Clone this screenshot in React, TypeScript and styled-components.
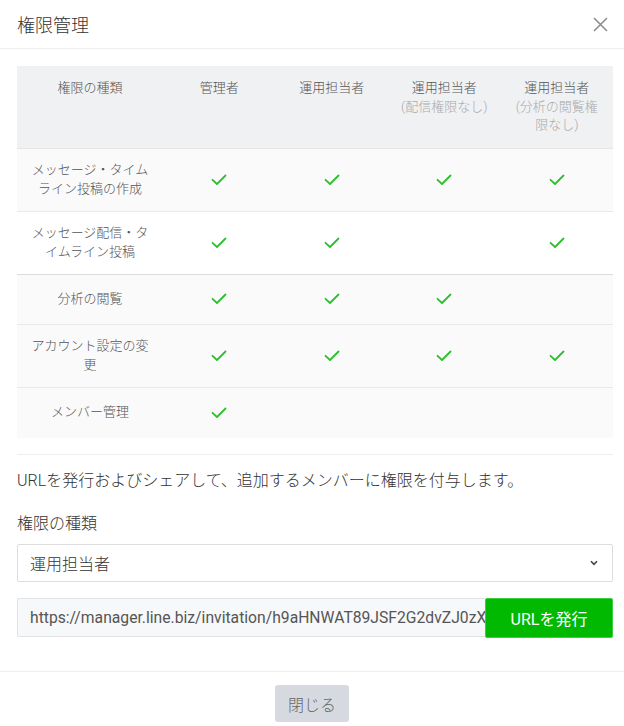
import React from "react";
import styled, { createGlobalStyle } from "styled-components";

const GlobalStyle = createGlobalStyle`
  html, body {
    margin: 0;
    padding: 0;
    background: #ffffff;
  }
  body {
    font-family: Roboto, "Noto Sans CJK JP", sans-serif;
    color: #333333;
  }
  * {
    box-sizing: border-box;
  }
`;

const Modal = styled.div`
  width: 624px;
  height: 726px;
  background: #ffffff;
  display: flex;
  flex-direction: column;
`;

const Header = styled.div`
  height: 49px;
  padding: 0 14px 0 17px;
  border-bottom: 1px solid #eeeeee;
  display: flex;
  align-items: center;
  justify-content: space-between;
`;

const Title = styled.h1`
  margin: 0;
  font-size: 18px;
  font-weight: 300;
  color: #333333;
`;

const CloseIcon = styled.button`
  width: 20px;
  height: 20px;
  padding: 0;
  border: none;
  background: none;
  display: flex;
  align-items: center;
  justify-content: center;
  cursor: pointer;
`;

const Body = styled.div`
  padding: 17px 11px 0 17px;
  flex: 1;
`;

const Table = styled.div`
  display: grid;
  grid-template-columns: 146px repeat(4, 1fr);
  font-size: 13px;
  font-weight: 300;
  line-height: 18.5px;
  color: #555555;
`;

const HeadCell = styled.div`
  background: #f0f1f3;
  padding: 13px 10px;
  text-align: center;
  border-bottom: 1px solid #e6e6e6;
`;

const Sub = styled.span`
  display: block;
  color: #aaaaaa;
`;

const Cell = styled.div<{ $white?: boolean; $strong?: boolean; $last?: boolean }>`
  background: ${(p) => (p.$white ? "#ffffff" : "#fafafa")};
  border-bottom: ${(p) =>
    p.$last ? "none" : p.$strong ? "1px solid #dcdcdc" : "1px solid #e9e9e9"};
  min-height: 50px;
  padding: 12.5px 14px;
  display: flex;
  align-items: center;
  justify-content: center;
  text-align: center;
`;

const Divider = styled.div`
  height: 1px;
  background: #eeeeee;
  margin-top: 16px;
`;

const Desc = styled.p`
  margin: 15px 0 0;
  font-size: 16px;
  font-weight: 300;
  line-height: 22px;
  color: #333333;
`;

const Label = styled.div`
  margin-top: 21px;
  font-size: 16px;
  font-weight: 300;
  line-height: 22px;
  color: #333333;
`;

const Select = styled.div`
  margin-top: 9px;
  height: 38px;
  border: 1px solid #dddddd;
  border-radius: 2px;
  padding: 0 14px 0 12px;
  display: flex;
  align-items: center;
  justify-content: space-between;
  font-size: 16px;
  font-weight: 300;
  color: #333333;
`;

const UrlRow = styled.div`
  margin-top: 16px;
  display: flex;
  height: 40px;
`;

const UrlInput = styled.div`
  flex: 1;
  min-width: 0;
  height: 39px;
  border: 1px solid #e3e3e3;
  border-right: none;
  background: #f7f8f9;
  border-radius: 2px 0 0 2px;
  padding: 0 12px;
  display: flex;
  align-items: center;
  overflow: hidden;
  white-space: nowrap;
  font-size: 15.7px;
  color: #555555;
`;

const IssueButton = styled.button`
  width: 128px;
  height: 40px;
  border: 1px solid #3ccf3c;
  background: #00b900;
  color: #ffffff;
  font-family: inherit;
  font-size: 16px;
  border-radius: 2px;
  cursor: pointer;
`;

const Footer = styled.div`
  height: 55px;
  border-top: 1px solid #eeeeee;
  display: flex;
  justify-content: center;
  padding-top: 13px;
`;

const CloseButton = styled.button`
  width: 74px;
  height: 37px;
  border: none;
  border-radius: 3px;
  background: #d6dae0;
  color: #666666;
  font-family: inherit;
  font-size: 16px;
  font-weight: 300;
  cursor: pointer;
`;

const Check = () => (
  <svg width="16" height="12" viewBox="0 0 16 12">
    <path
      d="M1.5 5.8 L6 10 L14.5 1.5"
      fill="none"
      stroke="#2dbf2d"
      strokeWidth="1.8"
      strokeLinecap="round"
      strokeLinejoin="round"
    />
  </svg>
);

type Row = { name: string; checks: boolean[]; white?: boolean; strong?: boolean };

const rows: Row[] = [
  { name: "メッセージ・タイムライン投稿の作成", checks: [true, true, true, true] },
  { name: "メッセージ配信・タイムライン投稿", checks: [true, true, false, true], white: true, strong: true },
  { name: "分析の閲覧", checks: [true, true, true, false] },
  { name: "アカウント設定の変更", checks: [true, true, true, true] },
  { name: "メンバー管理", checks: [true, false, false, false] },
];

export default function App() {
  return (
    <>
      <GlobalStyle />
      <Modal>
        <Header>
          <Title>権限管理</Title>
          <CloseIcon aria-label="close">
            <svg width="15" height="15" viewBox="0 0 15 15">
              <path d="M1 1 L14 14 M14 1 L1 14" stroke="#8a8a8a" strokeWidth="1.5" />
            </svg>
          </CloseIcon>
        </Header>
        <Body>
          <Table>
            <HeadCell>権限の種類</HeadCell>
            <HeadCell>管理者</HeadCell>
            <HeadCell>運用担当者</HeadCell>
            <HeadCell>
              運用担当者
              <Sub>(配信権限なし)</Sub>
            </HeadCell>
            <HeadCell>
              運用担当者
              <Sub>(分析の閲覧権限なし)</Sub>
            </HeadCell>
            {rows.map((r, i) => (
              <React.Fragment key={r.name}>
                <Cell $white={r.white} $strong={r.strong} $last={i === rows.length - 1}>
                  {r.name}
                </Cell>
                {r.checks.map((c, j) => (
                  <Cell
                    key={j}
                    $white={r.white}
                    $strong={r.strong}
                    $last={i === rows.length - 1}
                  >
                    {c ? <Check /> : null}
                  </Cell>
                ))}
              </React.Fragment>
            ))}
          </Table>
          <Divider />
          <Desc>URLを発行およびシェアして、追加するメンバーに権限を付与します。</Desc>
          <Label>権限の種類</Label>
          <Select>
            <span>運用担当者</span>
            <svg width="8" height="6" viewBox="0 0 8 6">
              <path d="M1 1.2 L4 4.4 L7 1.2" fill="none" stroke="#444" strokeWidth="1.6" />
            </svg>
          </Select>
          <UrlRow>
            <UrlInput>https://manager.line.biz/invitation/h9aHNWAT89JSF2G2dvZJ0zXyQ3</UrlInput>
            <IssueButton>URLを発行</IssueButton>
          </UrlRow>
        </Body>
        <Footer>
          <CloseButton>閉じる</CloseButton>
        </Footer>
      </Modal>
    </>
  );
}
